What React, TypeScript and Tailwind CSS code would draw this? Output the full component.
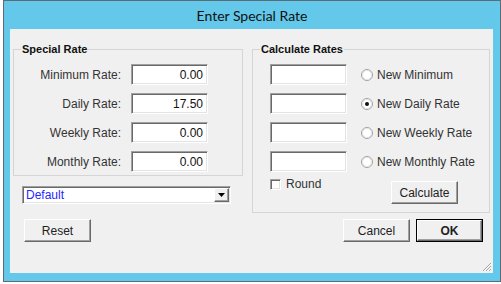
import React from "react";

const sunken =
  "border border-t-[#a0a0a0] border-l-[#a0a0a0] border-r-[#ffffff] border-b-[#ffffff] shadow-[inset_1px_1px_0_#696969,inset_-1px_-1px_0_#e3e3e3] bg-white";

const raised =
  "border border-t-white border-l-white border-r-[#696969] border-b-[#696969] shadow-[inset_-1px_-1px_0_#a0a0a0] bg-[#f0f0f0]";

const Radio = ({ checked }: { checked?: boolean }) => (
  <svg width="12" height="12" viewBox="0 0 12 12">
    <circle cx="6" cy="6" r="5.5" fill="#fff" stroke="#a0a0a0" />
    <circle cx="6" cy="6" r="4.5" fill="none" stroke="#e3e3e3" />
    {checked && <circle cx="6" cy="6" r="2" fill="#111" />}
  </svg>
);

const Button = ({ label, isDefault }: { label: string; isDefault?: boolean }) => (
  <div className={`${isDefault ? "border border-black" : ""} h-[23px] w-[67px]`}>
    <div
      className={`${raised} w-full h-full flex items-center justify-center text-[12px] text-[#222] ${isDefault ? "font-bold" : ""}`}
    >
      {label}
    </div>
  </div>
);

export default function App() {
  const left = [
    { label: "Minimum Rate:", value: "0.00" },
    { label: "Daily Rate:", value: "17.50" },
    { label: "Weekly Rate:", value: "0.00" },
    { label: "Monthly Rate:", value: "0.00" },
  ];
  const right = [
    { label: "New Minimum", checked: false },
    { label: "New Daily Rate", checked: true },
    { label: "New Weekly Rate", checked: false },
    { label: "New Monthly Rate", checked: false },
  ];

  return (
    <div className="w-[501px] h-[284px] bg-white font-['Liberation_Sans',Arial,sans-serif] text-[#1e1e1e]">
      <div className="ml-[3px] w-[498px] h-[282px] border border-[#5c6c76] bg-[#63c8e9] flex flex-col">
        <div className="h-[28px] flex items-center justify-center font-['Lato',sans-serif] text-[14px] text-[#111] pt-[1px]">
          Enter Special Rate
        </div>
        <div className="relative ml-[6px] w-[483px] h-[244px] bg-[#f0f0f0] flex pt-[20px] pl-[3px]">
          {/* left column */}
          <div className="w-[230px] flex flex-col">
            <div className="relative h-[127px] border border-[#d5d5d5] pt-[14px] flex flex-col gap-[8px]">
              <span className="absolute left-[7px] top-[-9px] bg-[#f0f0f0] px-[1px] text-[11px] font-bold text-[#111]">
                Special Rate
              </span>
              {left.map((r) => (
                <div key={r.label} className="flex items-center h-[21px]">
                  <div className="w-[107px] text-right text-[12px] text-[#333]">{r.label}</div>
                  <div
                    className={`${sunken} ml-[10px] w-[77px] h-[21px] flex items-center justify-end pr-[4px] text-[12px] text-[#111]`}
                  >
                    {r.value}
                  </div>
                </div>
              ))}
            </div>
            <div
              className={`${sunken} mt-[10px] ml-[9px] w-[209px] h-[18px] flex items-center justify-between pl-[3px] pr-[1px]`}
            >
              <span className="text-[12px] text-[#2626ff]">Default</span>
              <div className={`${raised} w-[15px] h-[14px] flex items-center justify-center`}>
                <svg width="7" height="4" viewBox="0 0 7 4">
                  <path d="M0 0h7L3.5 4z" fill="#000" />
                </svg>
              </div>
            </div>
            <div className="mt-[15px] ml-[11px]">
              <Button label="Reset" />
            </div>
          </div>

          {/* right column */}
          <div className="ml-[9px] w-[238px] flex flex-col">
            <div className="relative h-[164px] border border-[#d5d5d5] pt-[14px] flex flex-col">
              <span className="absolute left-[7px] top-[-9px] bg-[#f0f0f0] px-[1px] text-[11px] font-bold text-[#111]">
                Calculate Rates
              </span>
              <div className="flex flex-col gap-[8px]">
                {right.map((r) => (
                  <div key={r.label} className="flex items-center h-[21px]">
                    <div className={`${sunken} ml-[17px] w-[77px] h-[21px]`} />
                    <div className="ml-[14px] flex items-center">
                      <Radio checked={r.checked} />
                    </div>
                    <span className="ml-[4px] text-[12px] text-[#333]">{r.label}</span>
                  </div>
                ))}
              </div>
              <div className="mt-[7px] flex items-start">
                <div className="ml-[17px] flex items-center">
                  <div className={`${sunken} w-[11px] h-[11px]`} />
                  <span className="ml-[5px] text-[12px] leading-[11px] text-[#333]">Round</span>
                </div>
                <div className="ml-auto mr-[31px] mt-[2px]">
                  <Button label="Calculate" />
                </div>
              </div>
            </div>
            <div className="mt-[6px] flex justify-end gap-[6px] mr-[7px]">
              <Button label="Cancel" />
              <Button label="OK" isDefault />
            </div>
          </div>

          <svg className="absolute right-[1px] bottom-[1px]" width="11" height="11" viewBox="0 0 11 11">
            <path d="M10 2L2 10M10 5L5 10M10 8L8 10" stroke="#a0a0a0" strokeWidth="1" />
            <path d="M10 3L3 10M10 6L6 10M10 9L9 10" stroke="#fff" strokeWidth="1" />
          </svg>
        </div>
      </div>
    </div>
  );
}
